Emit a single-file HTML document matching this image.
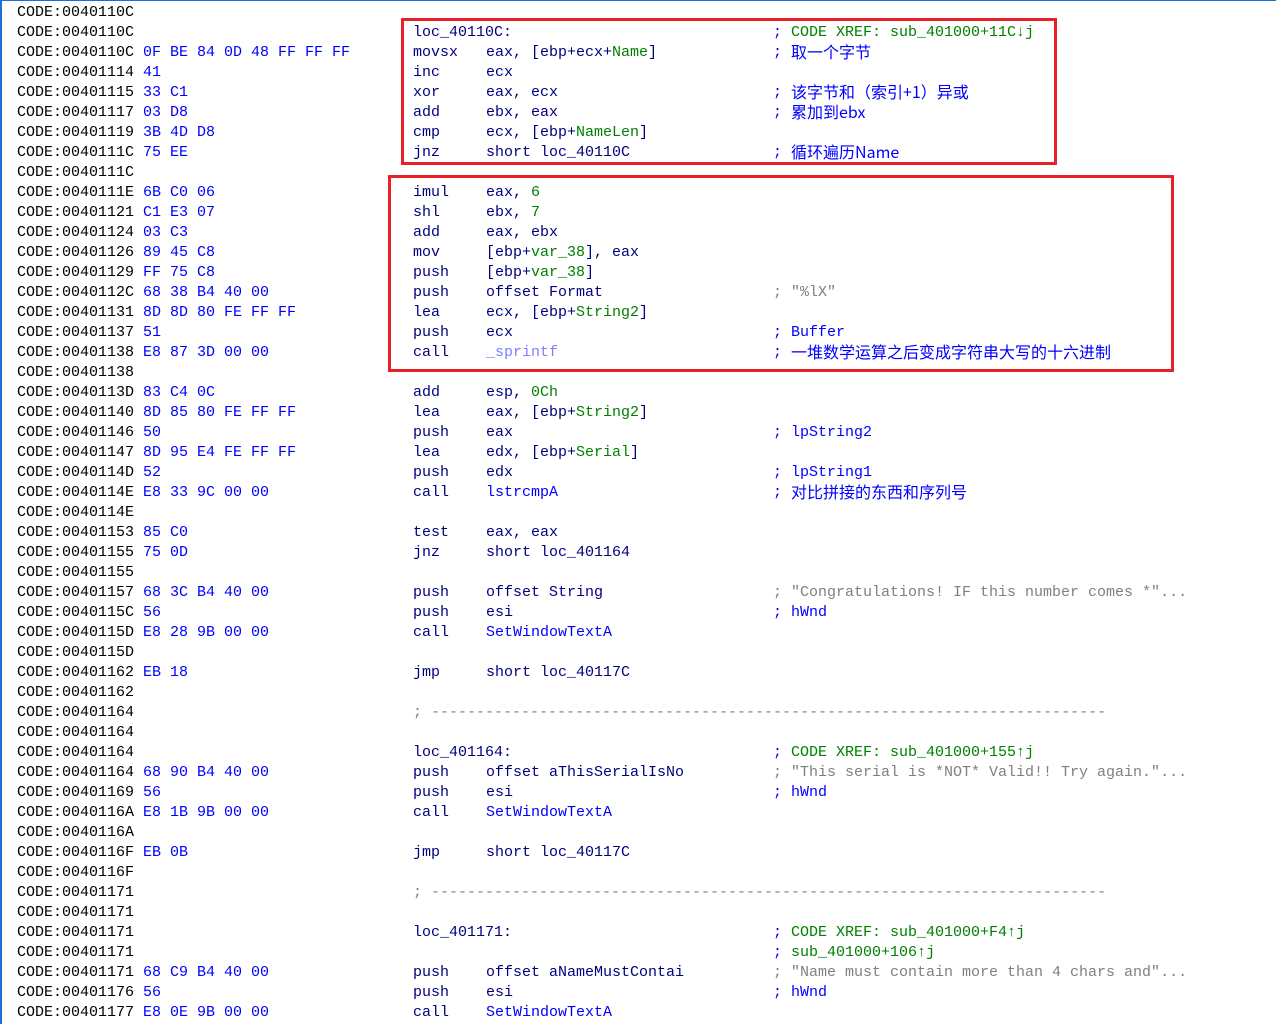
<!DOCTYPE html>
<html><head><meta charset="utf-8"><style>
html,body{margin:0;padding:0;background:#fff;width:1276px;height:1024px;overflow:hidden;position:relative}
body{font-family:"Liberation Mono",monospace;font-size:15px;color:#000080}
.l{position:absolute;left:0;height:20px;line-height:20px;white-space:pre;width:1276px}
.l>span{position:absolute;top:0}
.a{left:17px;color:#000}
.b{left:143px;color:#0000ff}
.i{left:413px}
.o{left:486px}
.c{left:773px;color:#0000ff}
.g{color:#008000}
.gr{color:#808080}
.bl{color:#0000ff}
.pu{color:#8080ff}
.l>span.cj{left:791px;top:-2px;color:#0000ff;font-family:"Noto Sans CJK SC",sans-serif;font-size:16px;line-height:20px}
.box{position:absolute;border:3px solid #e8202a;box-sizing:border-box}
#lb{position:absolute;left:0;top:0;width:2px;height:1024px;background:#1a6fd0}
#tb{position:absolute;left:0;top:0;width:1276px;height:1px;background:#1a6fd0}
</style></head><body>
<div id="lb"></div><div id="tb"></div>
<div class="box" style="left:401px;top:18px;width:656px;height:147px"></div>
<div class="box" style="left:388px;top:175px;width:786px;height:197px"></div>

<div class="l" style="top:3px"><span class="a">CODE:0040110C</span></div>
<div class="l" style="top:23px"><span class="a">CODE:0040110C</span><span class="i">loc_40110C:</span><span class="c">; <span class="g">CODE XREF: sub_401000+11C↓j</span></span></div>
<div class="l" style="top:43px"><span class="a">CODE:0040110C</span><span class="b">0F BE 84 0D 48 FF FF FF</span><span class="i">movsx</span><span class="o">eax, [ebp+ecx+<span class="g">Name</span>]</span><span class="c">;</span><span class="cj">取一个字节</span></div>
<div class="l" style="top:63px"><span class="a">CODE:00401114</span><span class="b">41</span><span class="i">inc</span><span class="o">ecx</span></div>
<div class="l" style="top:83px"><span class="a">CODE:00401115</span><span class="b">33 C1</span><span class="i">xor</span><span class="o">eax, ecx</span><span class="c">;</span><span class="cj">该字节和（索引+1）异或</span></div>
<div class="l" style="top:103px"><span class="a">CODE:00401117</span><span class="b">03 D8</span><span class="i">add</span><span class="o">ebx, eax</span><span class="c">;</span><span class="cj">累加到ebx</span></div>
<div class="l" style="top:123px"><span class="a">CODE:00401119</span><span class="b">3B 4D D8</span><span class="i">cmp</span><span class="o">ecx, [ebp+<span class="g">NameLen</span>]</span></div>
<div class="l" style="top:143px"><span class="a">CODE:0040111C</span><span class="b">75 EE</span><span class="i">jnz</span><span class="o">short loc_40110C</span><span class="c">;</span><span class="cj">循环遍历Name</span></div>
<div class="l" style="top:163px"><span class="a">CODE:0040111C</span></div>
<div class="l" style="top:183px"><span class="a">CODE:0040111E</span><span class="b">6B C0 06</span><span class="i">imul</span><span class="o">eax, <span class="g">6</span></span></div>
<div class="l" style="top:203px"><span class="a">CODE:00401121</span><span class="b">C1 E3 07</span><span class="i">shl</span><span class="o">ebx, <span class="g">7</span></span></div>
<div class="l" style="top:223px"><span class="a">CODE:00401124</span><span class="b">03 C3</span><span class="i">add</span><span class="o">eax, ebx</span></div>
<div class="l" style="top:243px"><span class="a">CODE:00401126</span><span class="b">89 45 C8</span><span class="i">mov</span><span class="o">[ebp+<span class="g">var_38</span>], eax</span></div>
<div class="l" style="top:263px"><span class="a">CODE:00401129</span><span class="b">FF 75 C8</span><span class="i">push</span><span class="o">[ebp+<span class="g">var_38</span>]</span></div>
<div class="l" style="top:283px"><span class="a">CODE:0040112C</span><span class="b">68 38 B4 40 00</span><span class="i">push</span><span class="o">offset Format</span><span class="c gr">; "%lX"</span></div>
<div class="l" style="top:303px"><span class="a">CODE:00401131</span><span class="b">8D 8D 80 FE FF FF</span><span class="i">lea</span><span class="o">ecx, [ebp+<span class="g">String2</span>]</span></div>
<div class="l" style="top:323px"><span class="a">CODE:00401137</span><span class="b">51</span><span class="i">push</span><span class="o">ecx</span><span class="c">; Buffer</span></div>
<div class="l" style="top:343px"><span class="a">CODE:00401138</span><span class="b">E8 87 3D 00 00</span><span class="i">call</span><span class="o pu">_sprintf</span><span class="c">;</span><span class="cj">一堆数学运算之后变成字符串大写的十六进制</span></div>
<div class="l" style="top:363px"><span class="a">CODE:00401138</span></div>
<div class="l" style="top:383px"><span class="a">CODE:0040113D</span><span class="b">83 C4 0C</span><span class="i">add</span><span class="o">esp, <span class="g">0Ch</span></span></div>
<div class="l" style="top:403px"><span class="a">CODE:00401140</span><span class="b">8D 85 80 FE FF FF</span><span class="i">lea</span><span class="o">eax, [ebp+<span class="g">String2</span>]</span></div>
<div class="l" style="top:423px"><span class="a">CODE:00401146</span><span class="b">50</span><span class="i">push</span><span class="o">eax</span><span class="c">; lpString2</span></div>
<div class="l" style="top:443px"><span class="a">CODE:00401147</span><span class="b">8D 95 E4 FE FF FF</span><span class="i">lea</span><span class="o">edx, [ebp+<span class="g">Serial</span>]</span></div>
<div class="l" style="top:463px"><span class="a">CODE:0040114D</span><span class="b">52</span><span class="i">push</span><span class="o">edx</span><span class="c">; lpString1</span></div>
<div class="l" style="top:483px"><span class="a">CODE:0040114E</span><span class="b">E8 33 9C 00 00</span><span class="i">call</span><span class="o bl">lstrcmpA</span><span class="c">;</span><span class="cj">对比拼接的东西和序列号</span></div>
<div class="l" style="top:503px"><span class="a">CODE:0040114E</span></div>
<div class="l" style="top:523px"><span class="a">CODE:00401153</span><span class="b">85 C0</span><span class="i">test</span><span class="o">eax, eax</span></div>
<div class="l" style="top:543px"><span class="a">CODE:00401155</span><span class="b">75 0D</span><span class="i">jnz</span><span class="o">short loc_401164</span></div>
<div class="l" style="top:563px"><span class="a">CODE:00401155</span></div>
<div class="l" style="top:583px"><span class="a">CODE:00401157</span><span class="b">68 3C B4 40 00</span><span class="i">push</span><span class="o">offset String</span><span class="c gr">; "Congratulations! IF this number comes *"...</span></div>
<div class="l" style="top:603px"><span class="a">CODE:0040115C</span><span class="b">56</span><span class="i">push</span><span class="o">esi</span><span class="c">; hWnd</span></div>
<div class="l" style="top:623px"><span class="a">CODE:0040115D</span><span class="b">E8 28 9B 00 00</span><span class="i">call</span><span class="o bl">SetWindowTextA</span></div>
<div class="l" style="top:643px"><span class="a">CODE:0040115D</span></div>
<div class="l" style="top:663px"><span class="a">CODE:00401162</span><span class="b">EB 18</span><span class="i">jmp</span><span class="o">short loc_40117C</span></div>
<div class="l" style="top:683px"><span class="a">CODE:00401162</span></div>
<div class="l" style="top:703px"><span class="a">CODE:00401164</span><span class="i gr">; ---------------------------------------------------------------------------</span></div>
<div class="l" style="top:723px"><span class="a">CODE:00401164</span></div>
<div class="l" style="top:743px"><span class="a">CODE:00401164</span><span class="i">loc_401164:</span><span class="c">; <span class="g">CODE XREF: sub_401000+155↑j</span></span></div>
<div class="l" style="top:763px"><span class="a">CODE:00401164</span><span class="b">68 90 B4 40 00</span><span class="i">push</span><span class="o">offset aThisSerialIsNo</span><span class="c gr">; "This serial is *NOT* Valid!! Try again."...</span></div>
<div class="l" style="top:783px"><span class="a">CODE:00401169</span><span class="b">56</span><span class="i">push</span><span class="o">esi</span><span class="c">; hWnd</span></div>
<div class="l" style="top:803px"><span class="a">CODE:0040116A</span><span class="b">E8 1B 9B 00 00</span><span class="i">call</span><span class="o bl">SetWindowTextA</span></div>
<div class="l" style="top:823px"><span class="a">CODE:0040116A</span></div>
<div class="l" style="top:843px"><span class="a">CODE:0040116F</span><span class="b">EB 0B</span><span class="i">jmp</span><span class="o">short loc_40117C</span></div>
<div class="l" style="top:863px"><span class="a">CODE:0040116F</span></div>
<div class="l" style="top:883px"><span class="a">CODE:00401171</span><span class="i gr">; ---------------------------------------------------------------------------</span></div>
<div class="l" style="top:903px"><span class="a">CODE:00401171</span></div>
<div class="l" style="top:923px"><span class="a">CODE:00401171</span><span class="i">loc_401171:</span><span class="c">; <span class="g">CODE XREF: sub_401000+F4↑j</span></span></div>
<div class="l" style="top:943px"><span class="a">CODE:00401171</span><span class="c">; <span class="g">sub_401000+106↑j</span></span></div>
<div class="l" style="top:963px"><span class="a">CODE:00401171</span><span class="b">68 C9 B4 40 00</span><span class="i">push</span><span class="o">offset aNameMustContai</span><span class="c gr">; "Name must contain more than 4 chars and"...</span></div>
<div class="l" style="top:983px"><span class="a">CODE:00401176</span><span class="b">56</span><span class="i">push</span><span class="o">esi</span><span class="c">; hWnd</span></div>
<div class="l" style="top:1003px"><span class="a">CODE:00401177</span><span class="b">E8 0E 9B 00 00</span><span class="i">call</span><span class="o bl">SetWindowTextA</span></div>
</body></html>
